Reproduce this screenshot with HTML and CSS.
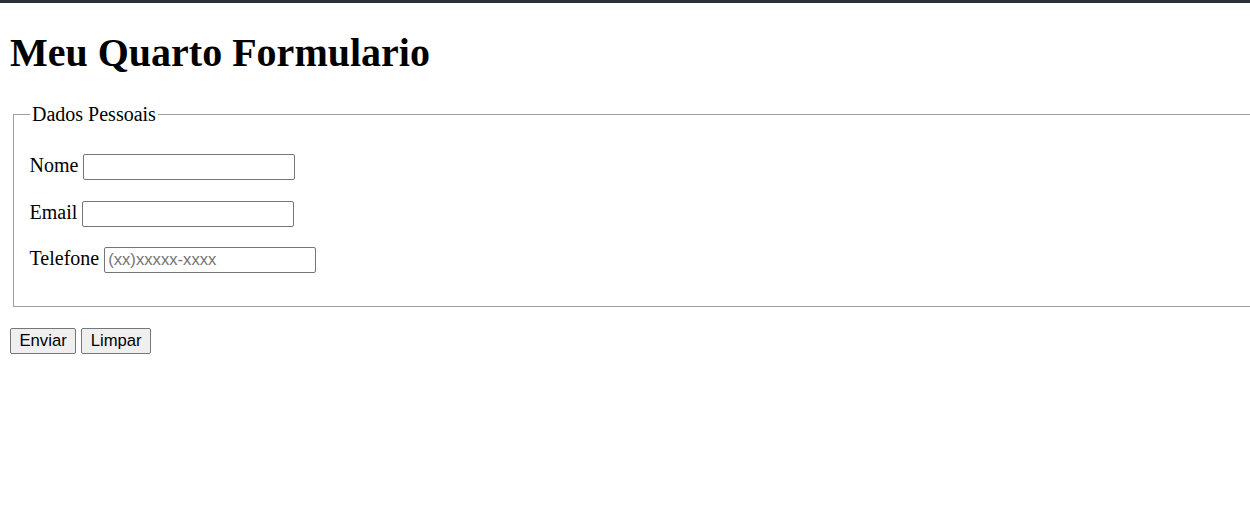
FILE: index.html
```html
<!DOCTYPE html>
<html lang="pt">
<head>
<meta charset="utf-8">
<title>Meu Quarto Formulario</title>
<link rel="stylesheet" href="styles.css">
</head>
<body>
<div class="topbar"></div>
<div class="page">
  <h1 class="title">Meu Quarto Formulario</h1>
  <form class="form">
    <fieldset class="group">
      <legend class="group-legend">Dados Pessoais</legend>
      <p class="row"><label class="label" for="nome">Nome</label> <input class="field" id="nome" type="text"></p>
      <p class="row"><label class="label" for="email">Email</label> <input class="field" id="email" type="email"></p>
      <p class="row"><label class="label" for="tel">Telefone</label> <input class="field" id="tel" type="tel" placeholder="(xx)xxxxx-xxxx"></p>
    </fieldset>
    <p class="actions"><button class="btn" type="submit">Enviar</button> <button class="btn" type="reset">Limpar</button></p>
  </form>
</div>
</body>
</html>
```
FILE: styles.css
```css
html, body {
  margin: 0;
  padding: 0;
  background: #ffffff;
}
body {
  font-family: "Liberation Serif", "Times New Roman", serif;
  font-size: 20px;
  color: #000000;
}
.topbar {
  height: 3px;
  background: #2b2f36;
}
.page {
  padding: 0 10px;
}
.title {
  font-size: 40px;
  font-weight: bold;
  line-height: 46px;
  margin: 26.8px 0;
}
.form {
  margin: 0;
}
.group {
  margin: 0 -20px 0 2.5px;
  border: 1px solid #a0a0a0;
  padding: 8px 15px 12.5px 16px;
}
.group-legend {
  padding: 0 2.5px;
  font-size: 20px;
}
.row {
  margin: 20.5px 0;
}
.label {
  font-size: 20px;
}
.field {
  box-sizing: border-box;
  width: 212px;
  height: 26px;
  border: 1px solid #767676;
  border-radius: 2px;
  padding: 1px 3px;
  font-family: "Liberation Sans", Arial, sans-serif;
  font-size: 16.67px;
  background: #ffffff;
}
.field::placeholder {
  color: #757575;
}
.actions {
  margin: 21px 0;
}
.btn {
  box-sizing: border-box;
  height: 26px;
  border: 1px solid #767676;
  border-radius: 2px;
  padding: 0 8.5px;
  background: #efefef;
  font-family: "Liberation Sans", Arial, sans-serif;
  font-size: 16.67px;
  color: #000000;
}
```
